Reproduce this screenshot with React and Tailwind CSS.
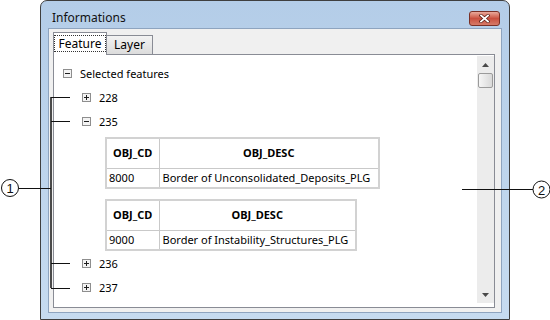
import React from "react";

function Expander({ open }) {
  return (
    <svg width="9" height="9" viewBox="0 0 9 9" className="shrink-0">
      <rect x="0.5" y="0.5" width="8" height="8" fill="#f3f3f3" stroke="#8e8e8e" />
      <path d="M2 4.5h5" stroke="#1f1f1f" />
      {!open && <path d="M4.5 2v5" stroke="#1f1f1f" />}
    </svg>
  );
}

function Node({ open, label, child }) {
  return (
    <div className={`flex h-[24px] items-center gap-[8px] ${child ? "pl-[19px]" : ""}`}>
      <Expander open={open} />
      <span className="leading-none">{label}</span>
    </div>
  );
}

function FeatureTable({ code, desc, wide }) {
  const cell = "border border-[#c9c9c9]";
  return (
    <table
      className={`ml-[42px] table-fixed border-collapse border-2 border-[#d2d2d2] ${wide ? "w-[275px]" : "w-[252px]"}`}
    >
      <colgroup>
        <col className="w-[53px]" />
        <col />
      </colgroup>
      <thead>
        <tr className="h-[30px]">
          <th className={`${cell} text-center font-bold`}>OBJ_CD</th>
          <th className={`${cell} text-center font-bold`}>OBJ_DESC</th>
        </tr>
      </thead>
      <tbody>
        <tr className="h-[20px] leading-[16px]">
          <td className={`${cell} px-[2px] text-left`}>{code}</td>
          <td className={`${cell} px-[3px] text-left whitespace-nowrap`}>{desc}</td>
        </tr>
      </tbody>
    </table>
  );
}

function Scrollbar() {
  return (
    <div className="flex w-[17px] shrink-0 flex-col bg-[#ececec]">
      <div className="flex h-[17px] items-center justify-center">
        <svg width="7" height="4" viewBox="0 0 7 4">
          <path d="M0 4L3.5 0L7 4Z" fill="#4a4a4a" />
        </svg>
      </div>
      <div className="mx-[1px] h-[15px] rounded-[2px] border border-[#9b9b9b] bg-gradient-to-r from-[#f6f6f6] to-[#d9d9d9]" />
      <div className="flex-1" />
      <div className="flex h-[17px] items-center justify-center">
        <svg width="7" height="4" viewBox="0 0 7 4">
          <path d="M0 0L7 0L3.5 4Z" fill="#4a4a4a" />
        </svg>
      </div>
    </div>
  );
}

function CloseButton() {
  return (
    <div className="flex h-[15px] w-[31px] items-center justify-center rounded-[3px] border border-[#7a3026] bg-gradient-to-b from-[#e9aa9c] via-[#c9503f] to-[#d67a68]">
      <svg width="11" height="9" viewBox="0 0 11 9">
        <path d="M2 1.5L9 7.5M9 1.5L2 7.5" stroke="#5a1d14" strokeWidth="3.2" strokeLinecap="square" />
        <path d="M2 1.5L9 7.5M9 1.5L2 7.5" stroke="#ffffff" strokeWidth="1.8" strokeLinecap="square" />
      </svg>
    </div>
  );
}

function Callouts() {
  return (
    <svg
      width="550"
      height="320"
      viewBox="0 0 550 320"
      className="pointer-events-none absolute left-0 top-0"
    >
      <path d="M51 97V288" stroke="#4a4a4a" strokeWidth="2" />
      <path d="M51 97.5H70M51 121.5H70M51 263.5H70M51 288.5H70" stroke="#111" />
      <path d="M19 188.5H51" stroke="#111" />
      <circle cx="10" cy="188" r="8.5" fill="white" stroke="#111" />
      <text x="10" y="193" textAnchor="middle" fontSize="13" fontFamily="Liberation Sans, sans-serif" fill="#111">
        1
      </text>
      <path d="M462 189.5H533" stroke="#111" />
      <circle cx="541.5" cy="189.5" r="8.5" fill="white" stroke="#111" />
      <text x="541.5" y="194.5" textAnchor="middle" fontSize="13" fontFamily="Liberation Sans, sans-serif" fill="#111">
        2
      </text>
    </svg>
  );
}

export default function App() {
  return (
    <div className="relative h-[320px] w-[550px] overflow-hidden bg-white font-['Noto_Sans',sans-serif] text-[11px] text-black">
      {/* Window */}
      <div className="ml-[40px] flex h-[320px] w-[470px] flex-col rounded-t-[7px] border border-[#3f3f3f] bg-gradient-to-b from-[#b4cde8] to-[#c6dbf0]">
        {/* Title bar */}
        <div className="flex h-[27px] items-end justify-between pb-[2px] pl-[11px] pr-[9px]">
          <span className="text-[12px] leading-[16px] text-[#111]">Informations</span>
          <CloseButton />
        </div>

        {/* Client area */}
        <div className="mx-[7px] flex h-[285px] flex-col border border-[#8ea4bf] bg-[#f0f0f0] pb-[4px] pl-[4px] pr-[6px] pt-[3px]">
          {/* Tabs */}
          <div className="flex items-end">
            <div className="relative z-10 -mb-px flex h-[23px] w-[54px] items-start justify-center border border-b-0 border-[#898c95] bg-white pt-[2px]">
              <span className="border border-dotted border-[#333] px-[4px] text-[12px] leading-[15px]">Feature</span>
            </div>
            <div className="flex h-[19px] w-[46px] items-center justify-center border border-b-0 border-l-0 border-[#898c95] bg-gradient-to-b from-[#f3f3f3] to-[#dcdcdc] text-[12px]">
              Layer
            </div>
          </div>

          {/* Tab panel */}
          <div className="flex flex-1 border border-[#898c95] bg-white pb-[4px] pt-[1px]">
            <div className="flex flex-1 flex-col pl-[9px] pt-[5px]">
              <Node open label="Selected features" />
              <Node child label="228" />
              <Node child open label="235" />
              <div className="mt-[4px]">
                <FeatureTable wide code="8000" desc="Border of Unconsolidated_Deposits_PLG" />
              </div>
              <div className="mt-[10px]">
                <FeatureTable code="9000" desc="Border of Instability_Structures_PLG" />
              </div>
              <div>
                <Node child label="236" />
                <Node child label="237" />
              </div>
            </div>
            <Scrollbar />
          </div>
        </div>
      </div>

      <Callouts />
    </div>
  );
}
